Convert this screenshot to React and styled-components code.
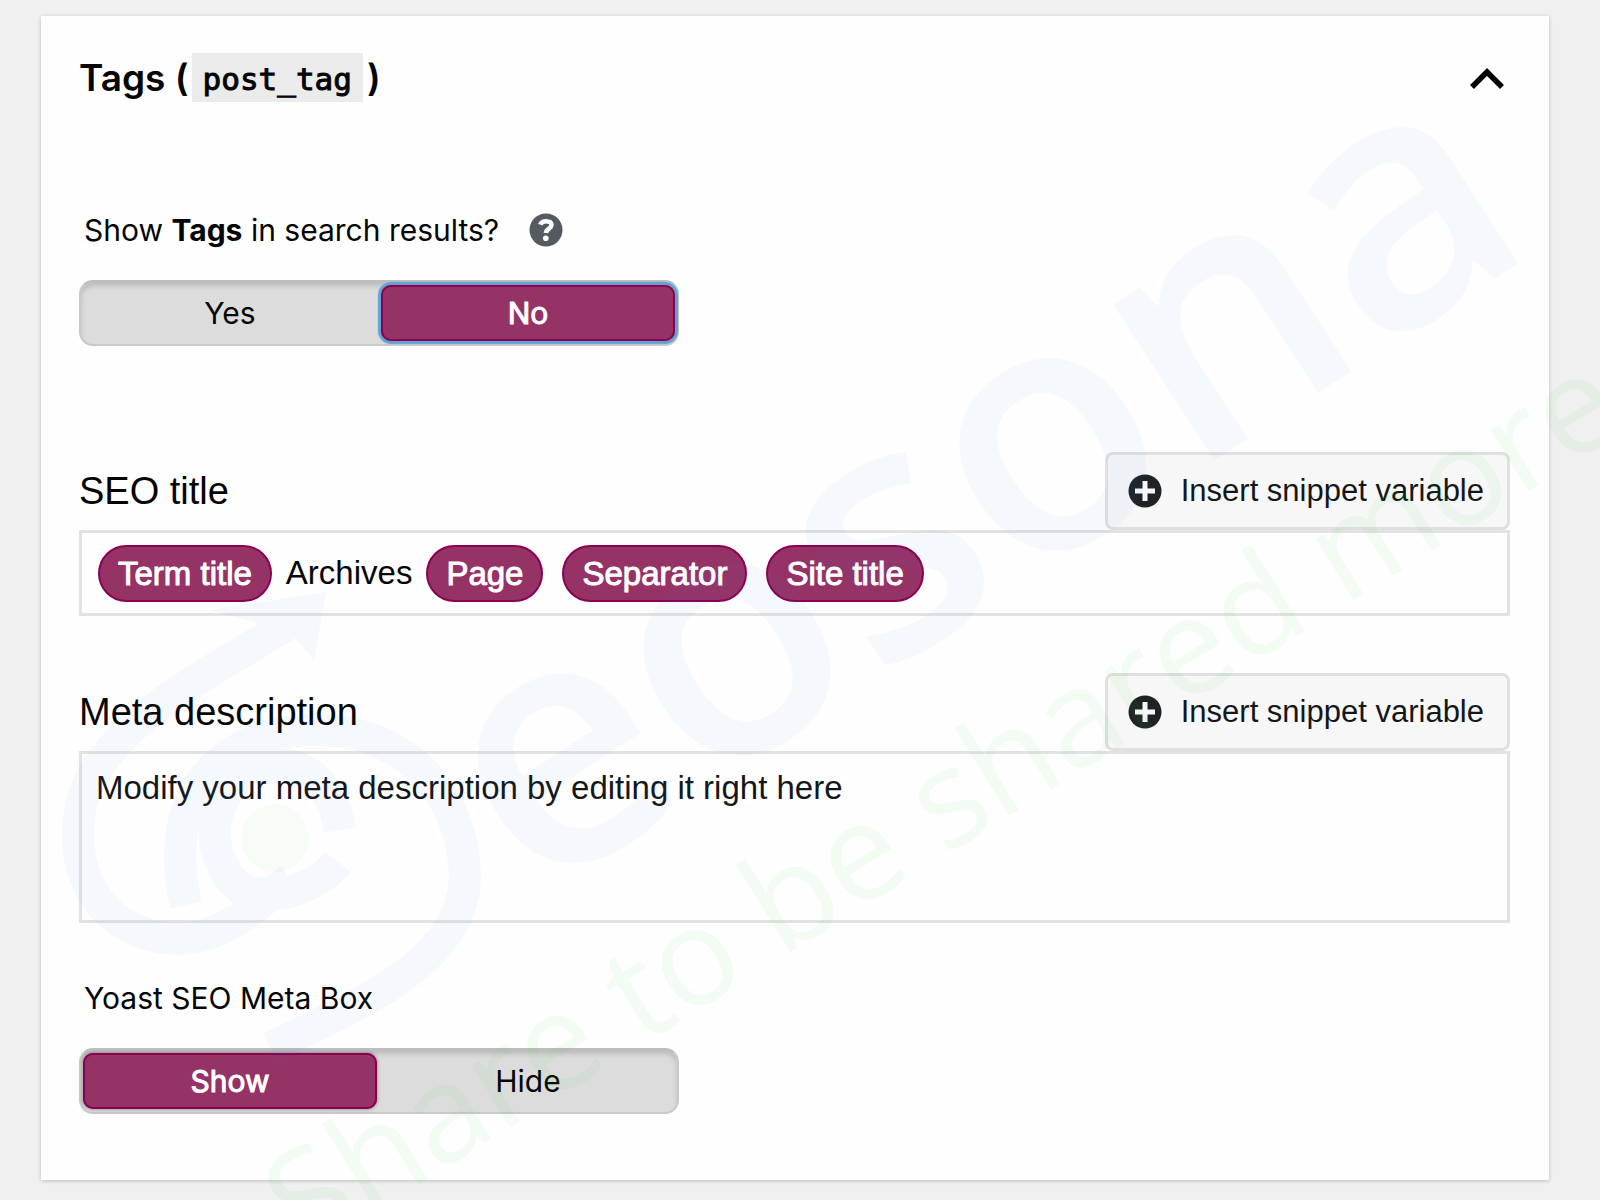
import React, { useState } from "react";
import styled, { createGlobalStyle } from "styled-components";

const ui = `Inter, "Liberation Sans", sans-serif`;
const arial = `"Liberation Sans", Arial, sans-serif`;
const plum = "#963366";
const plumEdge = "#8c0053";

const GlobalStyle = createGlobalStyle`
  *, *::before, *::after { box-sizing: border-box; }
  body { margin: 0; background: #f0f0f0; color: #050505; font-family: ${ui}; }
`;

const Page = styled.div`
  position: relative;
  min-height: 100vh;
  padding: 16px 51px 21px 41px;
  overflow: hidden;
`;

const Card = styled.main`
  padding: 37px 39px 66px 38px;
  background: #fefefe;
  box-shadow: 0 1px 4px rgba(0, 0, 0, 0.22);
`;

const CardHeader = styled.header`
  display: flex;
  align-items: center;
  justify-content: space-between;
`;

const Title = styled.h1`
  display: flex;
  align-items: center;
  margin: 0;
  font-size: 37px;
  line-height: 49px;
  font-weight: 600;
  white-space: pre;
`;

const Slug = styled.code`
  margin: 0 4px 0 3px;
  padding: 3px 11px 0;
  height: 49px;
  line-height: 46px;
  background: #ebebeb;
  font-family: "DejaVu Sans Mono", monospace;
  font-size: 31px;
  font-weight: 400;
  -webkit-text-stroke: 1px currentColor;
`;

const CollapseButton = styled.button`
  display: flex;
  padding: 4px;
  border: 0;
  background: none;
  color: #000;
  cursor: pointer;
`;

const ToggleGroup = styled.fieldset`
  margin: 0;
  padding: 0;
  border: 0;
  min-width: 0;
`;

const ToggleHeading = styled.div`
  display: flex;
  align-items: center;
  gap: 30px;
  padding-left: 5px;
  height: 36px;
`;

const Legend = styled.span`
  font-size: 30px;
  line-height: 36px;
`;

const HelpButton = styled.button`
  display: flex;
  padding: 0;
  border: 0;
  background: none;
  cursor: pointer;
`;

const Track = styled.div`
  display: flex;
  gap: 4px;
  width: 600px;
  max-width: 100%;
  height: 66px;
  margin-top: 32px;
  padding: 3px 2px;
  border: 2px solid #c9c9c9;
  border-top-color: #bdbdbd;
  border-radius: 14px;
  background: #dcdcdc;
  box-shadow: inset 0 4px 5px rgba(0, 0, 0, 0.15);
`;

const Option = styled.label`
  flex: 1;
  display: flex;
  align-items: center;
  justify-content: center;
  border-radius: 10px;
  font-size: 30px;
  line-height: 36px;
  color: ${(p) => (p.$on ? "#fff" : "#050505")};
  background: ${(p) => (p.$on ? plum : "transparent")};
  -webkit-text-stroke: ${(p) => (p.$on ? "1px currentColor" : "0")};
  box-shadow: ${(p) =>
    !p.$on
      ? "none"
      : p.$ring
        ? `inset 0 0 0 2px ${plumEdge}, 0 0 1px 3px #5fa3d3`
        : `inset 0 0 0 2px ${plumEdge}, 0 0 3px 1px rgba(0, 0, 0, 0.25)`};
  cursor: pointer;
`;

const HiddenRadio = styled.input`
  position: absolute;
  opacity: 0;
  pointer-events: none;
`;

const Field = styled.section`
  display: flex;
  flex-direction: column;
`;

const FieldHeader = styled.div`
  display: flex;
  align-items: center;
  justify-content: space-between;
`;

const FieldLabel = styled.label`
  font-family: ${arial};
  font-size: 38px;
  line-height: 44px;
`;

const InsertButton = styled.button`
  display: flex;
  align-items: center;
  gap: 19px;
  height: 78px;
  padding: 0 23px 0 20px;
  border: 3px solid #e0e0e0;
  border-radius: 8px;
  background: #f7f7f7;
  color: #14171a;
  font-family: ${arial};
  font-size: 31px;
  line-height: 36px;
  cursor: pointer;
`;

const TitleEditor = styled.div`
  display: flex;
  align-items: center;
  height: 86px;
  padding: 0 16px;
  border: 3px solid #e2e2e2;
  background: #fefefe;
  font-family: ${arial};
  font-size: 33px;
  line-height: 38px;
  outline: 0;
`;

const PlainText = styled.span`
  margin: 0 14px;
`;

const Pill = styled.span`
  padding: 8px 18px;
  border: 2px solid ${plumEdge};
  border-radius: 29px;
  background: ${plum};
  color: #fff;
  line-height: 37px;
  -webkit-text-stroke: 1px currentColor;

  & + & {
    margin-left: 19px;
  }
`;

const DescriptionEditor = styled.textarea`
  display: block;
  width: 100%;
  height: 172px;
  padding: 15px 14px;
  border: 3px solid #e2e2e2;
  border-radius: 0;
  background: #fefefe;
  color: #14171a;
  font-family: ${arial};
  font-size: 33px;
  line-height: 38px;
  resize: none;
  outline: 0;
`;

const Stack = styled.div`
  display: flex;
  flex-direction: column;
  gap: ${(p) => p.$gap}px;
  margin-top: ${(p) => p.$top}px;
`;

const Watermark = styled.svg`
  position: absolute;
  top: 0;
  left: 0;
  width: 1600px;
  height: 1200px;
  pointer-events: none;
`;

function PlusIcon() {
  return (
    <svg width="34" height="34" viewBox="0 0 34 34" aria-hidden="true">
      <circle cx="17" cy="17" r="16.5" fill="#1f2326" />
      <path d="M17 7v20M7 17h20" stroke="#f7f7f7" strokeWidth="5" />
    </svg>
  );
}

function HelpIcon() {
  return (
    <svg width="34" height="34" viewBox="0 0 34 34" aria-hidden="true">
      <circle cx="17" cy="17" r="16.5" fill="#555a60" />
      <path
        d="M11.2 11.600c1-2.400 3.200-3.300 6-3.300 3.200 0 5.300 1.300 5.300 3.800 0 3.600-5.300 3.500-5.600 7.900"
        fill="none"
        stroke="#fff"
        strokeWidth="4.500"
      />
      <circle cx="16.800" cy="25.300" r="2.800" fill="#fff" />
    </svg>
  );
}

function Toggle({ name, legend, help, options, initial, ring }) {
  const [value, setValue] = useState(initial);
  return (
    <ToggleGroup aria-labelledby={`${name}-legend`}>
      <ToggleHeading>
        <Legend id={`${name}-legend`}>{legend}</Legend>
        {help && (
          <HelpButton type="button" aria-label="Help">
            <HelpIcon />
          </HelpButton>
        )}
      </ToggleHeading>
      <Track>
        {options.map((option) => (
          <Option key={option} $on={value === option} $ring={ring}>
            <HiddenRadio
              type="radio"
              name={name}
              checked={value === option}
              onChange={() => setValue(option)}
            />
            {option}
          </Option>
        ))}
      </Track>
    </ToggleGroup>
  );
}

function InsertVariable() {
  return (
    <InsertButton type="button">
      <PlusIcon />
      Insert snippet variable
    </InsertButton>
  );
}

function BrandWatermark() {
  return (
    <Watermark viewBox="0 0 1600 1200" aria-hidden="true">
      <g opacity="0.045">
        <g fill="none" stroke="#2f74c8" strokeWidth="32">
          <path d="M300 616C220 670 110 715 82 800C62 890 120 945 190 938C240 930 265 895 290 880" />
          <path d="M186 905C160 790 225 735 305 730C400 725 465 790 465 880C460 960 370 1000 270 1048" />
          <path d="M340 830C330 770 290 755 250 770C205 800 205 860 240 888C275 905 320 885 338 862" />
        </g>
        <path d="M210 610L326 592L314 660L290 632Z" fill="#2f74c8" />
        <text
          transform="translate(534 902) rotate(-33)"
          fontFamily="Open Sans, sans-serif"
          fontSize="343"
          fontWeight="600"
          fill="#2f74c8"
        >
          eosona
        </text>
      </g>
      <g fill="#35d035">
        <circle cx="275" cy="838" r="34" opacity="0.04" />
        <text
          transform="translate(304 1256) rotate(-32)"
          fontFamily="Open Sans, sans-serif"
          fontSize="135"
          fontWeight="400"
          opacity="0.06"
        >
          Share to be shared more
        </text>
      </g>
    </Watermark>
  );
}

export default function App() {
  return (
    <>
      <GlobalStyle />
      <Page>
        <Card>
          <CardHeader>
            <Title>
              Tags (<Slug>post_tag</Slug>)
            </Title>
            <CollapseButton type="button" aria-label="Collapse">
              <svg width="38" height="26" viewBox="0 0 38 26" aria-hidden="true">
                <path d="M4 22L19 7L34 22" fill="none" stroke="currentColor" strokeWidth="5.500" />
              </svg>
            </CollapseButton>
          </CardHeader>

          <Stack $gap={106} $top={110}>
            <Toggle
              name="show-tags"
              legend={
                <>
                  Show <b>Tags</b> in search results?
                </>
              }
              help
              options={["Yes", "No"]}
              initial="No"
              ring
            />
            <Stack $gap={57} $top={0}>
              <Field>
                <FieldHeader>
                  <FieldLabel id="seo-title-label">SEO title</FieldLabel>
                  <InsertVariable />
                </FieldHeader>
                <TitleEditor role="textbox" tabIndex={0} aria-labelledby="seo-title-label">
                  <Pill>Term title</Pill>
                  <PlainText>Archives</PlainText>
                  <Pill>Page</Pill>
                  <Pill>Separator</Pill>
                  <Pill>Site title</Pill>
                </TitleEditor>
              </Field>
              <Field>
                <FieldHeader>
                  <FieldLabel htmlFor="meta-description">Meta description</FieldLabel>
                  <InsertVariable />
                </FieldHeader>
                <DescriptionEditor
                  id="meta-description"
                  defaultValue="Modify your meta description by editing it right here"
                />
              </Field>
              <Toggle
                name="meta-box"
                legend="Yoast SEO Meta Box"
                options={["Show", "Hide"]}
                initial="Show"
              />
            </Stack>
          </Stack>
        </Card>
        <BrandWatermark />
      </Page>
    </>
  );
}
